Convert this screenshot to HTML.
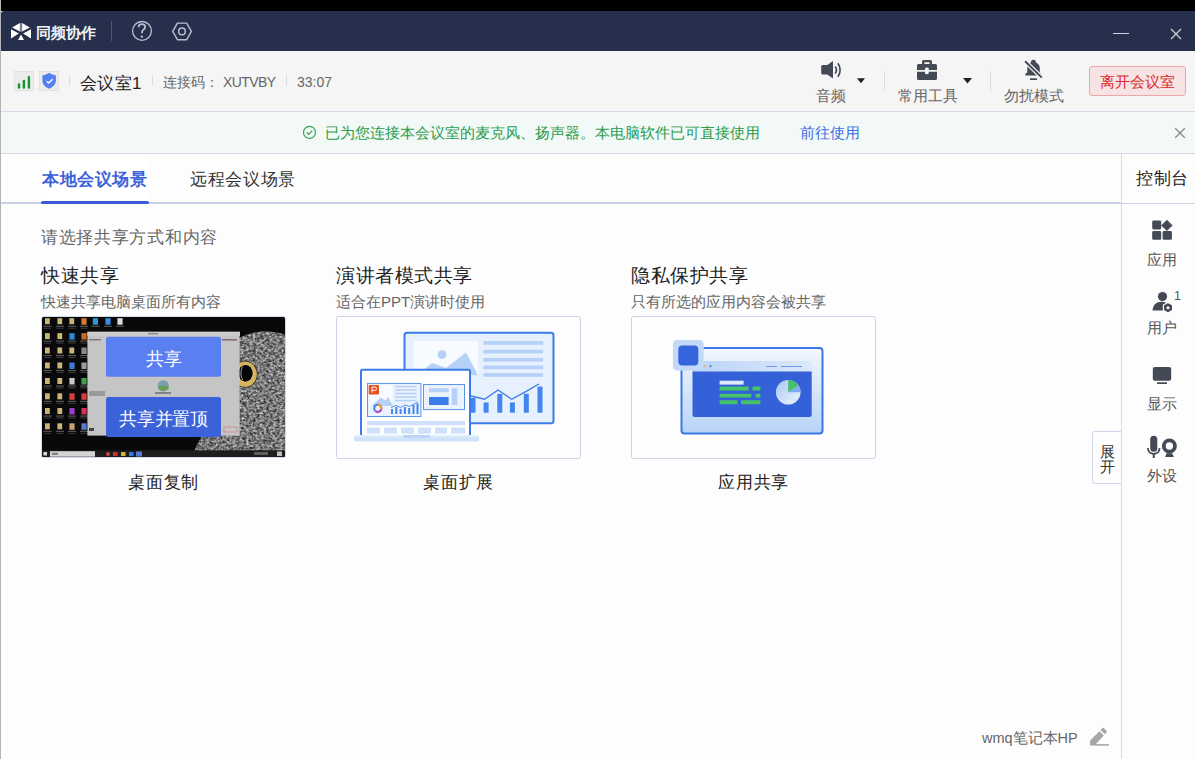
<!DOCTYPE html>
<html><head><meta charset="utf-8">
<style>
*{margin:0;padding:0;box-sizing:border-box}
html,body{width:1195px;height:759px;overflow:hidden;background:#fdfdfd;font-family:"Liberation Sans",sans-serif}
.abs{position:absolute}
#top{left:0;top:0;width:1195px;height:11px;background:#000}
#lb{left:0;top:0;width:1px;height:759px;background:#b4b4b4;z-index:5}
#title{left:1px;top:11px;width:1194px;height:40px;background:#262f4b;border-top-left-radius:3px}
#tool{left:1px;top:51px;width:1194px;height:60px;background:#f5f5f5}
#banner{left:1px;top:111px;width:1194px;height:43px;background:#f2f9f6;border-top:1px solid #d3d9e6;border-bottom:1px solid #d3d9e6}
#main{left:1px;top:154px;width:1120px;height:605px;background:#fdfdfd}
#side{left:1121px;top:154px;width:74px;height:605px;background:#fdfdfd;border-left:1px solid #d6dbea}
.t{position:absolute;white-space:nowrap;line-height:1}
svg{position:absolute;overflow:visible}
.sep{position:absolute;width:1px;background:#dcdcdc}
</style></head><body>
<div class="abs" id="top"></div>
<div class="abs" id="lb"></div>
<div class="abs" id="title"></div>
<div class="abs" id="tool"></div>
<div class="abs" id="banner"></div>
<div class="abs" id="main"></div>
<div class="abs" id="side"></div>

<!-- TITLEBAR -->
<svg style="left:0;top:0" width="1195" height="759" viewBox="0 0 1195 759">
<!-- logo -->
<g fill="#fff">
<path d="M12.1 27.6 L19.85 23 L19.85 31.6 Z"/>
<path d="M22.15 23 L29.9 27.6 L22.15 31.6 Z"/>
<path d="M11 29.2 L18.9 33.6 L11 38.5 Z"/>
<path d="M31 29.2 L23.1 33.6 L31 38.5 Z"/>
<path d="M18 40 L24 40 L21 34.6 Z"/>
<rect x="20.3" y="23" width="1.4" height="9" fill="#9aa0b0"/>
</g>
<!-- help -->
<circle cx="142" cy="30.9" r="9.4" fill="none" stroke="#b8c0cf" stroke-width="1.3"/>
<path d="M138.6 27.2 C138.6 25.3 140 24.2 141.9 24.2 C143.8 24.2 145.2 25.4 145.2 27.1 C145.2 28.6 144.2 29.3 143.1 30.1 C142.2 30.8 141.9 31.4 141.9 32.6 L141.9 33.3" fill="none" stroke="#b8c0cf" stroke-width="1.8"/>
<circle cx="141.9" cy="36.6" r="1.2" fill="#b8c0cf"/>
<!-- settings -->
<path d="M172.7 31.4 L177.4 23.1 L186.7 23.1 L191.4 31.4 L186.7 39.7 L177.4 39.7 Z" fill="none" stroke="#b8c0cf" stroke-width="1.4" stroke-linejoin="round"/>
<circle cx="182" cy="31.4" r="3.3" fill="none" stroke="#b8c0cf" stroke-width="1.5"/>
<!-- close -->
<path d="M1171 29 L1181 39 M1181 29 L1171 39" stroke="#cfd2d9" stroke-width="1.3"/>
<!-- signal -->
<rect x="14.5" y="71.5" width="19" height="19" fill="#ececec" stroke="#e2e2e2"/>
<g stroke="#17932f" stroke-width="2.4" stroke-linecap="round">
<path d="M19 84.4 L19 87.5"/><path d="M23.9 81 L23.9 87.5"/><path d="M28.9 77.1 L28.9 87.5"/>
</g>
<rect x="39.5" y="71.5" width="19" height="19" fill="#ececec" stroke="#e2e2e2"/>
<path d="M49.1 72.8 C47 74.5 44.5 75.2 42.4 75.4 L42.4 80.5 C42.4 84.5 45.5 87.3 49.1 88.7 C52.7 87.3 55.9 84.5 55.9 80.5 L55.9 75.4 C53.7 75.2 51.2 74.5 49.1 72.8 Z" fill="#5580ef"/>
<path d="M46.6 81.2 L48.6 83 L52.6 79.3" fill="none" stroke="#fff" stroke-width="1.3"/>
<!-- speaker -->
<path d="M822.7 65 L827.3 65 L833 61 L833 78.6 L827.3 74.5 L822.7 74.5 Q821.2 74.5 821.2 73 L821.2 66.5 Q821.2 65 822.7 65 Z" fill="#434a56"/>
<path d="M835.1 66.5 Q837.9 70 835.1 73.5" fill="none" stroke="#434a56" stroke-width="1.7"/>
<path d="M837.9 63.2 Q842.4 70 837.9 76.7" fill="none" stroke="#434a56" stroke-width="1.6"/>
<path d="M857 78.2 L865 78.2 L861 83.3 Z" fill="#222"/>
<!-- toolbox -->
<path d="M923.5 60 L930.5 60 Q932 60 932 61.5 L932 64.2 L929.6 64.2 L929.6 62.2 L924.4 62.2 L924.4 64.2 L922 64.2 L922 61.5 Q922 60 923.5 60 Z" fill="#434a56"/>
<path d="M918.5 63.9 L935.5 63.9 Q937 63.9 937 65.4 L937 70 L928.8 70 L928.8 68.6 Q928.8 67.4 926.9 67.4 Q925 67.4 925 68.6 L925 70 L917 70 L917 65.4 Q917 63.9 918.5 63.9 Z" fill="#434a56"/>
<path d="M917 71.8 L925 71.8 L925 73 Q925 74.2 926.9 74.2 Q928.8 74.2 928.8 73 L928.8 71.8 L937 71.8 L937 78.4 Q937 79.9 935.5 79.9 L918.5 79.9 Q917 79.9 917 78.4 Z" fill="#434a56"/>
<path d="M963 78.1 L972 78.1 L967.5 83.5 Z" fill="#222"/>
<!-- bell off -->
<path d="M1033.4 59.8 C1031.6 59.8 1030.9 61 1030.9 62.6 C1028.6 63.6 1027.3 65.6 1027.3 68.2 L1027.3 72.6 C1026 73.1 1025.3 74 1025.3 75.5 L1041.5 75.5 C1041.5 74 1040.8 73.1 1039.8 72.6 L1039.8 68.2 C1039.8 65.6 1038.4 63.6 1036 62.6 C1036 61 1035.2 59.8 1033.4 59.8 Z" fill="#434a56"/>
<path d="M1024.8 61 L1042 77.8" stroke="#f5f5f5" stroke-width="4.4"/>
<path d="M1025.6 61.8 L1041.3 77.1" stroke="#434a56" stroke-width="1.9" stroke-linecap="round"/>
<rect x="1030" y="78.3" width="7" height="1.7" fill="#434a56"/>
<!-- banner check -->
<circle cx="309.5" cy="132.4" r="6" fill="none" stroke="#34a253" stroke-width="1.2"/>
<path d="M306.8 132.5 L308.8 134.5 L312.4 130.6" fill="none" stroke="#34a253" stroke-width="1.2"/>
<!-- banner close -->
<path d="M1175.2 128.2 L1184.8 137.8 M1184.8 128.2 L1175.2 137.8" stroke="#888" stroke-width="1.3"/>
<!-- sidebar icons -->
<g fill="#434a56">
<rect x="1152.2" y="220.5" width="9" height="9" rx="1.4"/>
<rect x="1152.2" y="231" width="9" height="8.8" rx="1.4"/>
<rect x="1162.6" y="231" width="9.3" height="8.8" rx="1.4"/>
<path d="M1166.9 220.2 L1172.1 225.4 L1166.9 230.6 L1161.7 225.4 Z" stroke="#434a56" stroke-width="0.8" stroke-linejoin="round"/>
<circle cx="1162.5" cy="296.6" r="4.6"/>
<path d="M1152.6 310.5 C1152.8 305 1156.5 301.8 1161.5 301.8 C1164 301.8 1166 302.5 1167.5 303.6 L1167.5 310.5 Z"/>
</g>
<path d="M1168 302.4 L1172.6 305 L1172.6 310.3 L1168 312.9 L1163.4 310.3 L1163.4 305 Z" fill="#434a56" stroke="#fdfdfd" stroke-width="1.2" stroke-linejoin="round"/>
<circle cx="1168" cy="307.7" r="1.5" fill="#fdfdfd"/>
<g fill="#434a56">
<rect x="1152.8" y="367" width="18.4" height="13.7" rx="2"/>
<rect x="1157.1" y="382.3" width="9.9" height="1.7"/>
<rect x="1150.2" y="435.7" width="7.1" height="16" rx="3.55"/>
<path d="M1153.75 458 L1153.75 453.4" stroke="#434a56" stroke-width="2"/>
<circle cx="1169.4" cy="446" r="5.6" fill="none" stroke="#434a56" stroke-width="3.8"/>
<path d="M1166.6 453.2 L1172.2 453.2 L1173.8 456.9 L1165 456.9 Z"/>
</g>
<path d="M1147.9 448 C1148 451.6 1150.6 453.8 1153.75 453.8 C1156.9 453.8 1159.5 451.6 1159.6 448" fill="none" stroke="#434a56" stroke-width="1.8"/>
<!-- pencil -->
<g fill="#a6a6a6">
<path d="M1090.1 740.4 L1099.4 731.3 L1103.8 735.6 L1094.6 745.6 L1090.1 745.6 Z"/>
<path d="M1100.4 729.9 L1102.3 728.2 Q1103.2 727.5 1104 728.3 L1106.6 730.9 Q1107.3 731.7 1106.5 732.5 L1104.8 734.3 Z"/>
<rect x="1094.7" y="744.1" width="14.2" height="1.6"/>
</g>
</svg>

<div class="t" style="left:36px;top:25px;font-size:15px;color:#eef0f4;font-weight:bold">同频协作</div>
<div class="sep" style="left:111px;top:21px;height:20px;background:#4e5670"></div>
<!--HELP-->
<!--SETTINGS-->
<div class="abs" style="left:1113px;top:33px;width:16px;height:1px;background:#d0d3da"></div>
<!--CLOSE-->

<!-- TOOLBAR -->
<!--SIGNAL-->
<div class="sep" style="left:69px;top:75px;height:11px"></div>
<div class="t" style="left:80px;top:75px;font-size:17px;letter-spacing:0.3px;color:#222">会议室1</div>
<div class="sep" style="left:152px;top:75px;height:11px"></div>
<div class="t" style="left:163px;top:75px;font-size:14px;color:#666">连接码：</div>
<div class="t" style="left:223px;top:75px;font-size:14px;letter-spacing:-0.6px;color:#666">XUTVBY</div>
<div class="sep" style="left:286px;top:75px;height:11px"></div>
<div class="t" style="left:297px;top:75px;font-size:14px;color:#666">33:07</div>

<!--TOOLICONS-->
<div class="t" style="left:816px;top:88px;font-size:15px;color:#666">音频</div>
<div class="sep" style="left:884px;top:71px;height:20px"></div>
<div class="t" style="left:898px;top:88px;font-size:15px;color:#666">常用工具</div>
<div class="sep" style="left:990px;top:71px;height:20px"></div>
<div class="t" style="left:1004px;top:88px;font-size:15px;color:#666">勿扰模式</div>
<div class="abs" style="left:1089px;top:66px;width:97px;height:30px;background:#f7e2e4;border:1px solid #eea7a9;border-radius:3px"></div>
<div class="t" style="left:1100px;top:74px;font-size:15px;color:#e0262b">离开会议室</div>

<!-- BANNER -->
<!--CHECK-->
<div class="t" style="left:325px;top:125px;font-size:15px;color:#2e9c4c">已为您连接本会议室的麦克风、扬声器。本电脑软件已可直接使用</div>
<div class="t" style="left:800px;top:125px;font-size:15px;color:#3c6fe3">前往使用</div>
<!--BCLOSE-->

<!-- TABS -->
<div class="abs" style="left:41px;top:154px;width:108px;height:48px;background:#fff"></div>
<div class="abs" style="left:1px;top:202px;width:1120px;height:2px;background:#c9d0e3"></div>
<div class="abs" style="left:41px;top:201px;width:108px;height:3px;background:#3a5cd9;border-radius:1.5px"></div>
<div class="t" style="left:42px;top:171px;font-size:17px;letter-spacing:0.5px;color:#3b62d8;font-weight:bold">本地会议场景</div>
<div class="t" style="left:190px;top:171px;font-size:17px;letter-spacing:0.7px;color:#333">远程会议场景</div>

<div class="t" style="left:41px;top:229px;font-size:17px;letter-spacing:0.7px;color:#666">请选择共享方式和内容</div>
<div class="t" style="left:41px;top:266px;font-size:19px;letter-spacing:0.5px;color:#222">快速共享</div>
<div class="t" style="left:41px;top:294px;font-size:15px;color:#666">快速共享电脑桌面所有内容</div>
<div class="t" style="left:336px;top:266px;font-size:19px;letter-spacing:0.5px;color:#222">演讲者模式共享</div>
<div class="t" style="left:336px;top:294px;font-size:15px;color:#666">适合在PPT演讲时使用</div>
<div class="t" style="left:631px;top:266px;font-size:19px;letter-spacing:0.5px;color:#222">隐私保护共享</div>
<div class="t" style="left:631px;top:294px;font-size:15px;color:#666">只有所选的应用内容会被共享</div>

<svg style="left:0;top:0" width="1195" height="759" viewBox="0 0 1195 759">
<defs>
<filter id="owltex" x="0" y="0" width="1" height="1">
<feTurbulence type="fractalNoise" baseFrequency="0.45 0.55" numOctaves="2" seed="7" result="n"/>
<feColorMatrix in="n" type="matrix" values="0 0 0 0 0.85  0 0 0 0 0.85  0 0 0 0 0.85  0 0 0 1.6 -0.45" result="c"/>
<feComposite in="c" in2="SourceGraphic" operator="in"/>
</filter>
<filter id="owltex2" x="0" y="0" width="1" height="1">
<feTurbulence type="fractalNoise" baseFrequency="0.3 0.4" numOctaves="2" seed="11" result="n"/>
<feColorMatrix in="n" type="matrix" values="0 0 0 0 0  0 0 0 0 0  0 0 0 0 0  0 0 0 1.5 -0.55" result="c"/>
<feComposite in="c" in2="SourceGraphic" operator="in"/>
</filter>
<clipPath id="t1clip"><rect x="42" y="317" width="243" height="140" rx="1.5"/></clipPath>
</defs>
<rect x="41.5" y="316.5" width="244" height="141" rx="2" fill="none" stroke="#d3daea" stroke-width="1"/>
<g clip-path="url(#t1clip)">
<rect x="42" y="317" width="243" height="140" fill="#09090b"/>
<rect x="45.0" y="318.2" width="4.8" height="6" fill="#c9b574"/>
<rect x="43.6" y="325.7" width="8" height="1.1" fill="#5a5a5a"/>
<rect x="44.1" y="327.7" width="7" height="1" fill="#3e3e3e"/>
<rect x="57.4" y="318.2" width="4.8" height="6" fill="#c9b574"/>
<rect x="56.0" y="325.7" width="8" height="1.1" fill="#5a5a5a"/>
<rect x="56.5" y="327.7" width="7" height="1" fill="#3e3e3e"/>
<rect x="69.4" y="318.2" width="4.8" height="6" fill="#c9b574"/>
<rect x="68.0" y="325.7" width="8" height="1.1" fill="#5a5a5a"/>
<rect x="68.5" y="327.7" width="7" height="1" fill="#3e3e3e"/>
<rect x="81.4" y="318.2" width="5.2" height="6.5" fill="#d8782a"/>
<rect x="80.0" y="325.7" width="8" height="1.1" fill="#5a5a5a"/>
<rect x="80.5" y="327.7" width="7" height="1" fill="#3e3e3e"/>
<rect x="45.0" y="333.1" width="4.8" height="6" fill="#c9b574"/>
<rect x="43.6" y="340.6" width="8" height="1.1" fill="#5a5a5a"/>
<rect x="44.1" y="342.6" width="7" height="1" fill="#3e3e3e"/>
<rect x="57.4" y="333.1" width="4.8" height="6" fill="#c9b574"/>
<rect x="56.0" y="340.6" width="8" height="1.1" fill="#5a5a5a"/>
<rect x="56.5" y="342.6" width="7" height="1" fill="#3e3e3e"/>
<rect x="69.4" y="333.1" width="5.2" height="6.5" fill="#2a8ad8"/>
<rect x="68.0" y="340.6" width="8" height="1.1" fill="#5a5a5a"/>
<rect x="68.5" y="342.6" width="7" height="1" fill="#3e3e3e"/>
<rect x="81.4" y="333.1" width="5.2" height="6.5" fill="#c86a20"/>
<rect x="80.0" y="340.6" width="8" height="1.1" fill="#5a5a5a"/>
<rect x="80.5" y="342.6" width="7" height="1" fill="#3e3e3e"/>
<rect x="45.0" y="347.5" width="4.8" height="6" fill="#c9b574"/>
<rect x="43.6" y="355.0" width="8" height="1.1" fill="#5a5a5a"/>
<rect x="44.1" y="357.0" width="7" height="1" fill="#3e3e3e"/>
<rect x="57.4" y="347.5" width="4.8" height="6" fill="#c9b574"/>
<rect x="56.0" y="355.0" width="8" height="1.1" fill="#5a5a5a"/>
<rect x="56.5" y="357.0" width="7" height="1" fill="#3e3e3e"/>
<rect x="69.4" y="347.5" width="4.8" height="6" fill="#c9b574"/>
<rect x="68.0" y="355.0" width="8" height="1.1" fill="#5a5a5a"/>
<rect x="68.5" y="357.0" width="7" height="1" fill="#3e3e3e"/>
<rect x="81.4" y="347.5" width="5.2" height="6.5" fill="#8a8a8a"/>
<rect x="80.0" y="355.0" width="8" height="1.1" fill="#5a5a5a"/>
<rect x="80.5" y="357.0" width="7" height="1" fill="#3e3e3e"/>
<rect x="45.0" y="362.5" width="4.8" height="6" fill="#c9b574"/>
<rect x="43.6" y="370.0" width="8" height="1.1" fill="#5a5a5a"/>
<rect x="44.1" y="372.0" width="7" height="1" fill="#3e3e3e"/>
<rect x="57.4" y="362.5" width="4.8" height="6" fill="#c9b574"/>
<rect x="56.0" y="370.0" width="8" height="1.1" fill="#5a5a5a"/>
<rect x="56.5" y="372.0" width="7" height="1" fill="#3e3e3e"/>
<rect x="69.4" y="362.5" width="5.2" height="6.5" fill="#3a7ad8"/>
<rect x="68.0" y="370.0" width="8" height="1.1" fill="#5a5a5a"/>
<rect x="68.5" y="372.0" width="7" height="1" fill="#3e3e3e"/>
<rect x="81.4" y="362.5" width="5.2" height="6.5" fill="#9a9a9a"/>
<rect x="80.0" y="370.0" width="8" height="1.1" fill="#5a5a5a"/>
<rect x="80.5" y="372.0" width="7" height="1" fill="#3e3e3e"/>
<rect x="45.0" y="378.0" width="4.8" height="6" fill="#c9b574"/>
<rect x="43.6" y="385.5" width="8" height="1.1" fill="#5a5a5a"/>
<rect x="44.1" y="387.5" width="7" height="1" fill="#3e3e3e"/>
<rect x="57.4" y="378.0" width="4.8" height="6" fill="#c9b574"/>
<rect x="56.0" y="385.5" width="8" height="1.1" fill="#5a5a5a"/>
<rect x="56.5" y="387.5" width="7" height="1" fill="#3e3e3e"/>
<rect x="69.4" y="378.0" width="5.2" height="6.5" fill="#c8c8c8"/>
<rect x="68.0" y="385.5" width="8" height="1.1" fill="#5a5a5a"/>
<rect x="68.5" y="387.5" width="7" height="1" fill="#3e3e3e"/>
<rect x="81.4" y="378.0" width="5.2" height="6.5" fill="#3aa04a"/>
<rect x="80.0" y="385.5" width="8" height="1.1" fill="#5a5a5a"/>
<rect x="80.5" y="387.5" width="7" height="1" fill="#3e3e3e"/>
<rect x="45.0" y="393.3" width="4.8" height="6" fill="#c9b574"/>
<rect x="43.6" y="400.8" width="8" height="1.1" fill="#5a5a5a"/>
<rect x="44.1" y="402.8" width="7" height="1" fill="#3e3e3e"/>
<rect x="57.4" y="393.3" width="4.8" height="6" fill="#c9b574"/>
<rect x="56.0" y="400.8" width="8" height="1.1" fill="#5a5a5a"/>
<rect x="56.5" y="402.8" width="7" height="1" fill="#3e3e3e"/>
<rect x="69.4" y="393.3" width="5.2" height="6.5" fill="#d84040"/>
<rect x="68.0" y="400.8" width="8" height="1.1" fill="#5a5a5a"/>
<rect x="68.5" y="402.8" width="7" height="1" fill="#3e3e3e"/>
<rect x="81.4" y="393.3" width="5.2" height="6.5" fill="#d83a3a"/>
<rect x="80.0" y="400.8" width="8" height="1.1" fill="#5a5a5a"/>
<rect x="80.5" y="402.8" width="7" height="1" fill="#3e3e3e"/>
<rect x="45.0" y="408.0" width="4.8" height="6" fill="#c9b574"/>
<rect x="43.6" y="415.5" width="8" height="1.1" fill="#5a5a5a"/>
<rect x="44.1" y="417.5" width="7" height="1" fill="#3e3e3e"/>
<rect x="57.4" y="408.0" width="4.8" height="6" fill="#c9b574"/>
<rect x="56.0" y="415.5" width="8" height="1.1" fill="#5a5a5a"/>
<rect x="56.5" y="417.5" width="7" height="1" fill="#3e3e3e"/>
<rect x="69.4" y="408.0" width="5.2" height="6.5" fill="#9a3ac8"/>
<rect x="68.0" y="415.5" width="8" height="1.1" fill="#5a5a5a"/>
<rect x="68.5" y="417.5" width="7" height="1" fill="#3e3e3e"/>
<rect x="81.4" y="408.0" width="5.2" height="6.5" fill="#d83050"/>
<rect x="80.0" y="415.5" width="8" height="1.1" fill="#5a5a5a"/>
<rect x="80.5" y="417.5" width="7" height="1" fill="#3e3e3e"/>
<rect x="45.0" y="423.3" width="4.8" height="6" fill="#c9b574"/>
<rect x="43.6" y="430.8" width="8" height="1.1" fill="#5a5a5a"/>
<rect x="44.1" y="432.8" width="7" height="1" fill="#3e3e3e"/>
<rect x="57.4" y="423.3" width="4.8" height="6" fill="#c9b574"/>
<rect x="56.0" y="430.8" width="8" height="1.1" fill="#5a5a5a"/>
<rect x="56.5" y="432.8" width="7" height="1" fill="#3e3e3e"/>
<rect x="69.4" y="423.3" width="5.2" height="6.5" fill="#c8a070"/>
<rect x="68.0" y="430.8" width="8" height="1.1" fill="#5a5a5a"/>
<rect x="68.5" y="432.8" width="7" height="1" fill="#3e3e3e"/>
<rect x="81.4" y="423.3" width="5.2" height="6.5" fill="#5a7ad0"/>
<rect x="80.0" y="430.8" width="8" height="1.1" fill="#5a5a5a"/>
<rect x="80.5" y="432.8" width="7" height="1" fill="#3e3e3e"/>
<rect x="92.8" y="318.2" width="5.2" height="6.5" fill="#2a9ad0"/>
<rect x="91.4" y="325.7" width="8" height="1.1" fill="#5a5a5a"/>
<rect x="105.4" y="318.2" width="5.2" height="6.5" fill="#3a8ae0"/>
<rect x="104.0" y="325.7" width="8" height="1.1" fill="#5a5a5a"/>
<rect x="117.4" y="318.2" width="5.2" height="6.5" fill="#dddddd"/>
<rect x="116.0" y="325.7" width="8" height="1.1" fill="#5a5a5a"/>
<path id="owlshape" d="M238 339 C248 333 258 331 268 331.5 C276 332 282 333.5 286 335 L286 452 L194 452 C198 441 205 431 213 421 C223 406 231 386 235 362 Z" fill="#6a6a6a"/>
<path d="M238 339 C248 333 258 331 268 331.5 C276 332 282 333.5 286 335 L286 452 L194 452 C198 441 205 431 213 421 C223 406 231 386 235 362 Z" fill="#fff" filter="url(#owltex)"/>
<path d="M238 339 C248 333 258 331 268 331.5 C276 332 282 333.5 286 335 L286 452 L194 452 C198 441 205 431 213 421 C223 406 231 386 235 362 Z" fill="#000" filter="url(#owltex2)"/>
<ellipse cx="245" cy="374.2" rx="12.6" ry="13.4" fill="#2a2a2a"/>
<ellipse cx="245" cy="374.2" rx="11.9" ry="12.7" fill="#d2b25c"/>
<ellipse cx="245.3" cy="373.4" rx="8.6" ry="9.2" fill="#e2c87e"/>
<ellipse cx="245.5" cy="373.3" rx="7.2" ry="8.4" fill="#050505"/>
<path d="M242.6 366.5 C240.4 370 240.4 377 242.8 380" fill="none" stroke="#a8a8a8" stroke-width="1"/>
<rect x="87.4" y="331.8" width="152.2" height="103.8" fill="#c5c5c5"/>
<rect x="87.4" y="331.8" width="152.6" height="4" fill="#cdcdcd"/>
<rect x="148" y="333" width="10" height="1.4" fill="#888"/>
<rect x="89" y="339" width="12" height="1.4" fill="#777"/>
<rect x="222" y="339" width="15" height="1.6" fill="#8a6a6a"/>
<rect x="89" y="391" width="16" height="5" fill="#999"/>
<rect x="89" y="428" width="5" height="3" fill="#444"/>
<rect x="224" y="427" width="13" height="5" fill="none" stroke="#d07070" stroke-width="0.6"/>
<circle cx="163.3" cy="385.8" r="5.6" fill="#7aa0b0"/>
<path d="M158 388 Q163 384 168.8 387 L168.5 389 Q163 392 158.3 389 Z" fill="#6aa04a"/>
<rect x="155" y="392.5" width="16" height="1" fill="#444"/>
<rect x="106" y="336.8" width="115" height="40" rx="2.5" fill="#5a7ff0"/>
<rect x="106" y="397.1" width="115" height="39.8" rx="2.5" fill="#3b62d8"/>
<rect x="42" y="450.3" width="243" height="7" fill="#1d1d20"/>
<rect x="50" y="451.2" width="45" height="5.5" fill="#d4d4d4"/>
<rect x="43.5" y="452" width="3.5" height="3.5" fill="#ddd"/>
<rect x="52" y="452.8" width="6" height="2" fill="#777"/>
<circle cx="108" cy="454" r="2" fill="#d04a3a"/>
<rect x="113" y="452" width="4.5" height="4" fill="#c83030"/>
<rect x="121" y="452" width="4.5" height="4" fill="#d8b040"/>
<rect x="129" y="452" width="4.5" height="4" fill="#3a7ad8"/>
<rect x="136" y="451.5" width="6" height="5" fill="#5a7ad8"/>
<rect x="254" y="452" width="14" height="3" fill="#888" opacity="0.6"/>
<rect x="277" y="451.5" width="5" height="4.5" fill="#bbb"/>
</g>
</svg>
<div class="t" style="left:146px;top:350px;font-size:18px;color:#fff">共享</div>
<div class="t" style="left:119px;top:410px;font-size:18px;letter-spacing:-0.2px;color:#fff">共享并置顶</div>

<svg style="left:0;top:0" width="1195" height="759" viewBox="0 0 1195 759">
<rect x="336.5" y="316.5" width="244" height="142" rx="2" fill="#fdfdfe" stroke="#cbd2e5"/>
<!-- big monitor -->
<rect x="404.5" y="332.8" width="149" height="90.4" rx="2.5" fill="#e7f0fd" stroke="#3b7bea" stroke-width="2"/>
<rect x="413.8" y="341" width="64.2" height="34.3" fill="#f7faff"/>
<circle cx="442" cy="354.6" r="4.4" fill="#b5d1f7"/>
<path d="M417 375.3 L432 363 L446 368 L466 352.4 L478 375.3 Z" fill="#b5d1f7"/>
<g fill="#b5d1f7">
<rect x="483.4" y="341.1" width="59.8" height="3.7"/>
<rect x="483.4" y="349.8" width="59.8" height="3.7"/>
<rect x="483.4" y="357.9" width="59.8" height="3.7"/>
<rect x="483.4" y="365.5" width="59.8" height="3.7"/>
<rect x="483.4" y="373.1" width="59.8" height="3.7"/>
</g>
<g fill="#4384ee">
<rect x="470.5" y="398" width="5" height="14.7"/>
<rect x="483.6" y="402.5" width="5" height="10.2"/>
<rect x="497.3" y="393.8" width="5" height="18.9"/>
<rect x="509.9" y="402.5" width="5" height="10.2"/>
<rect x="523.8" y="393.8" width="5" height="18.9"/>
<rect x="537.5" y="386.6" width="5" height="26.1"/>
</g>
<path d="M471 396 L484.5 399.2 L498 390 L511.7 399.2 L525.8 391.6 L538.9 384" fill="none" stroke="#3b7bea" stroke-width="1.3"/>
<!-- laptop -->
<path d="M361 436 L361 371.2 Q361 369.7 362.5 369.7 L468.5 369.7 Q470 369.7 470 371.2 L470 436" fill="#fff" stroke="#3b7bea" stroke-width="2"/>
<rect x="367.5" y="383.4" width="53.4" height="33.1" fill="#eaf2fe" stroke="#5b93ee" stroke-width="1"/>
<rect x="369.5" y="385.3" width="23" height="21" fill="#f8fbff"/>
<path d="M371 406 L381 397.5 L385.5 400.5 L388 397 L393 406 Z" fill="#b5d1f7"/>
<rect x="368.7" y="385" width="10.3" height="9.4" rx="1" fill="#e8541f"/>
<path d="M372 392.5 L372 387 L374.8 387 Q376.6 387 376.6 388.7 Q376.6 390.4 374.8 390.4 L372 390.4" fill="none" stroke="#fff" stroke-width="0.9"/>
<g fill="#b5d1f7">
<rect x="395" y="385.8" width="21.5" height="1.5"/>
<rect x="395" y="389.3" width="21.5" height="1.5"/>
<rect x="395" y="392.8" width="21.5" height="1.5"/>
<rect x="395" y="396.3" width="21.5" height="1.5"/>
<rect x="395" y="399.8" width="21.5" height="1.5"/>
</g>
<circle cx="377.8" cy="408.3" r="3.6" fill="none" stroke="#4a7fe8" stroke-width="2"/>
<path d="M377.8 404.7 A3.6 3.6 0 0 1 381.2 409.5" fill="none" stroke="#f59a2a" stroke-width="2"/>
<path d="M381.2 409.5 A3.6 3.6 0 0 1 376 411.4" fill="none" stroke="#c042c0" stroke-width="2"/>
<g fill="#4384ee">
<rect x="391" y="409" width="2" height="5"/><rect x="395.3" y="407" width="2" height="7"/>
<rect x="399.6" y="409" width="2" height="5"/><rect x="403.9" y="407" width="2" height="7"/>
<rect x="408.2" y="408" width="2" height="6"/><rect x="412.5" y="405" width="2" height="9"/>
<rect x="416.5" y="403.5" width="2" height="10.5"/>
</g>
<path d="M391 407.5 L396 405.5 L400.5 407.5 L405 405 L409.5 406.5 L418 402" fill="none" stroke="#4384ee" stroke-width="0.9"/>
<rect x="423.5" y="384.5" width="41" height="25.1" fill="#eaf2fe" stroke="#5b93ee" stroke-width="1"/>
<rect x="429" y="388.3" width="19.6" height="3.9" fill="#b5d1f7"/>
<rect x="429" y="397" width="19.6" height="8" fill="#3a7de8"/>
<rect x="451.8" y="388.3" width="5.5" height="16.7" fill="#b5d1f7"/>
<rect x="367" y="421" width="98" height="4.3" fill="#cfe0fa"/>
<g fill="#cfe0fa">
<rect x="367" y="427.5" width="13" height="6.1"/><rect x="384" y="427.5" width="13" height="6.1"/>
<rect x="401" y="427.5" width="13" height="6.1"/><rect x="418" y="427.5" width="13" height="6.1"/>
<rect x="435" y="427.5" width="12" height="6.1"/><rect x="451" y="427.5" width="14" height="6.1"/>
</g>
<rect x="354" y="435" width="125" height="6.6" rx="2" fill="#cfe2fb"/>
<rect x="354" y="435" width="125" height="2.2" fill="#e3eefd"/>
<rect x="403" y="435" width="27" height="2.8" rx="1" fill="#b9d4f8"/>
</svg>

<svg style="left:0;top:0" width="1195" height="759" viewBox="0 0 1195 759">
<defs>
<linearGradient id="mon3" x1="0" y1="0" x2="0" y2="1"><stop offset="0" stop-color="#f3f7ff"/><stop offset="1" stop-color="#b8d4f7"/></linearGradient>
<linearGradient id="pie3" x1="0" y1="0" x2="1" y2="1"><stop offset="0" stop-color="#a9c8f3"/><stop offset="1" stop-color="#eef5fe"/></linearGradient>
<linearGradient id="tb3" x1="0" y1="0" x2="1" y2="0"><stop offset="0" stop-color="#b9d3f6"/><stop offset="1" stop-color="#dce9fb"/></linearGradient>
</defs>
<rect x="631.5" y="316.5" width="244" height="142" rx="2" fill="#fdfdfe" stroke="#cbd2e5"/>
<rect x="681.5" y="348" width="141" height="85.5" rx="3" fill="url(#mon3)" stroke="#3a78e8" stroke-width="2"/>
<rect x="692.5" y="361" width="119.2" height="11" fill="url(#tb3)"/>
<circle cx="704" cy="366.2" r="1.1" fill="#f0a040"/>
<circle cx="710.5" cy="366.2" r="1.1" fill="#6a86b8"/>
<path d="M766 366.5 L777 366.5 M781 366.5 L802 366.5" stroke="#6a9af0" stroke-width="1.2"/>
<path d="M692.5 371.6 L811.7 371.6 L811.7 415 Q811.7 417 809.7 417 L694.5 417 Q692.5 417 692.5 415 Z" fill="#3461d8"/>
<rect x="719.6" y="380.7" width="24" height="3.9" fill="#e0e9fb"/>
<g fill="#45c46a">
<rect x="719.6" y="386.6" width="29.1" height="3.9"/><rect x="752.5" y="386.6" width="7.9" height="3.9"/>
<rect x="719.6" y="393.8" width="31.6" height="3.7"/><rect x="755.6" y="393.8" width="4.8" height="3.7"/>
<rect x="719.6" y="400.3" width="17.9" height="3.9"/><rect x="741" y="400.3" width="19.4" height="3.9"/>
</g>
<circle cx="788.2" cy="392.2" r="12.3" fill="url(#pie3)"/>
<path d="M788.2 392.2 L788.2 379.9 A12.3 12.3 0 0 1 798.6 385.6 Z" fill="#46c068"/>
<path d="M788.2 392.2 L798.6 385.6 A12.3 12.3 0 0 1 800.5 392.2 Z" fill="#80aaf0"/>
<rect x="672.9" y="340" width="30.9" height="30.5" rx="4.5" fill="#c2daf8"/>
<rect x="678.3" y="345.5" width="20" height="20" rx="4" fill="#3564dd"/>
</svg>


<div class="t" style="left:128px;top:474px;font-size:17px;letter-spacing:0.8px;color:#222">桌面复制</div>
<div class="t" style="left:423px;top:474px;font-size:17px;letter-spacing:0.8px;color:#222">桌面扩展</div>
<div class="t" style="left:718px;top:474px;font-size:17px;letter-spacing:0.8px;color:#222">应用共享</div>

<!-- SIDEBAR -->
<div class="abs" style="left:1122px;top:203px;width:73px;height:1px;background:#cdd3e5"></div>
<div class="t" style="left:1136px;top:170px;font-size:17px;letter-spacing:0.5px;color:#222">控制台</div>
<!--SIDEICONS-->
<div class="t" style="left:1147px;top:252px;font-size:15px;color:#555">应用</div>
<div class="t" style="left:1147px;top:320px;font-size:15px;color:#555">用户</div>
<div class="t" style="left:1174px;top:290px;font-size:12.5px;color:#555">1</div>
<div class="t" style="left:1147px;top:396px;font-size:15px;color:#555">显示</div>
<div class="t" style="left:1147px;top:468px;font-size:15px;color:#555">外设</div>
<div class="abs" style="left:1092px;top:431px;width:29px;height:53px;background:#fdfdfd;border:1px solid #cfd6e8;border-right:none;border-radius:3px 0 0 3px"></div>
<div class="t" style="left:1100px;top:444px;font-size:15px;line-height:15px;color:#333;white-space:normal;width:16px">展开</div>

<!-- FOOTER -->
<div class="t" style="left:982px;top:731px;font-size:14.5px;color:#666">wmq笔记本HP</div>
<!--PENCIL-->
</body></html>
